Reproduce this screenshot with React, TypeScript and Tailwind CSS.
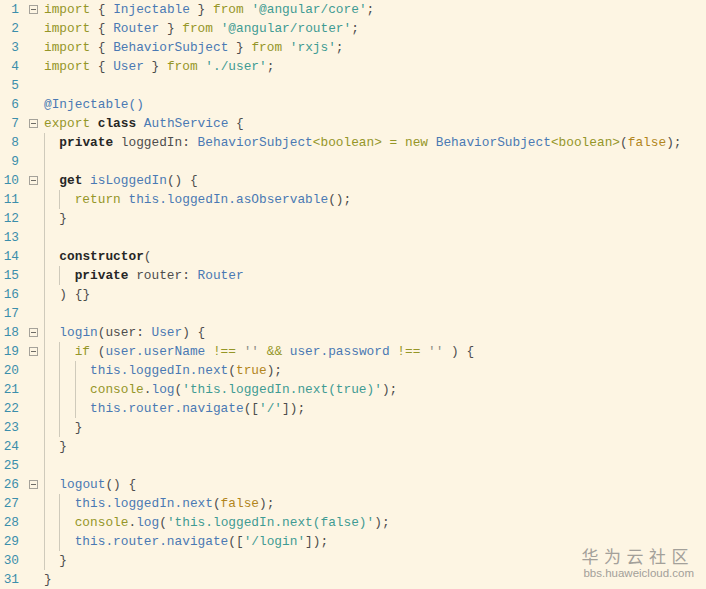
import React from "react";

type Tok = [string, string];
type Line = { g: number; fold?: boolean; toks: Tok[] };

const colors: Record<string, string> = {
  k: "text-[#959628]",
  t: "text-[#4a79b3]",
  s: "text-[#3f9b93]",
  q: "text-[#8e8e86]",
  d: "text-[#262626] font-bold",
  p: "text-[#4d4d4d]",
  b: "text-[#b2851c]",
};

const lines: Line[] = [
  { g: 0, fold: true, toks: [["import", "k"], [" { ", "p"], ["Injectable", "t"], [" } ", "p"], ["from", "k"], [" ", "p"], ["'@angular/core'", "s"], [";", "p"]] },
  { g: 0, toks: [["import", "k"], [" { ", "p"], ["Router", "t"], [" } ", "p"], ["from", "k"], [" ", "p"], ["'@angular/router'", "s"], [";", "p"]] },
  { g: 0, toks: [["import", "k"], [" { ", "p"], ["BehaviorSubject", "t"], [" } ", "p"], ["from", "k"], [" ", "p"], ["'rxjs'", "s"], [";", "p"]] },
  { g: 0, toks: [["import", "k"], [" { ", "p"], ["User", "t"], [" } ", "p"], ["from", "k"], [" ", "p"], ["'./user'", "s"], [";", "p"]] },
  { g: 0, toks: [] },
  { g: 0, toks: [["@Injectable()", "t"]] },
  { g: 0, fold: true, toks: [["export", "k"], [" ", "p"], ["class", "d"], [" ", "p"], ["AuthService", "t"], [" {", "p"]] },
  { g: 1, toks: [["private", "d"], [" loggedIn: ", "p"], ["BehaviorSubject", "t"], ["<boolean>", "k"], [" = ", "k"], ["new", "k"], [" ", "p"], ["BehaviorSubject", "t"], ["<boolean>", "k"], ["(", "p"], ["false", "b"], [");", "p"]] },
  { g: 1, toks: [] },
  { g: 1, fold: true, toks: [["get", "d"], [" ", "p"], ["isLoggedIn", "t"], ["() {", "p"]] },
  { g: 2, toks: [["return", "k"], [" ", "p"], ["this.loggedIn.asObservable", "t"], ["();", "p"]] },
  { g: 1, toks: [["}", "p"]] },
  { g: 1, toks: [] },
  { g: 1, toks: [["constructor", "d"], ["(", "p"]] },
  { g: 2, toks: [["private", "d"], [" router: ", "p"], ["Router", "t"]] },
  { g: 1, toks: [[") {}", "p"]] },
  { g: 1, toks: [] },
  { g: 1, fold: true, toks: [["login", "t"], ["(user: ", "p"], ["User", "t"], [") {", "p"]] },
  { g: 2, fold: true, toks: [["if", "k"], [" (", "p"], ["user.userName", "t"], [" ", "p"], ["!==", "k"], [" ", "p"], ["''", "q"], [" ", "p"], ["&&", "k"], [" ", "p"], ["user.password", "t"], [" ", "p"], ["!==", "k"], [" ", "p"], ["''", "q"], [" ) {", "p"]] },
  { g: 3, toks: [["this.loggedIn.next", "t"], ["(", "p"], ["true", "b"], [");", "p"]] },
  { g: 3, toks: [["console", "k"], [".", "p"], ["log", "t"], ["(", "p"], ["'this.loggedIn.next(true)'", "s"], [");", "p"]] },
  { g: 3, toks: [["this.router.navigate", "t"], ["([", "p"], ["'/'", "s"], ["]);", "p"]] },
  { g: 2, toks: [["}", "p"]] },
  { g: 1, toks: [["}", "p"]] },
  { g: 1, toks: [] },
  { g: 1, fold: true, toks: [["logout", "t"], ["() {", "p"]] },
  { g: 2, toks: [["this.loggedIn.next", "t"], ["(", "p"], ["false", "b"], [");", "p"]] },
  { g: 2, toks: [["console", "k"], [".", "p"], ["log", "t"], ["(", "p"], ["'this.loggedIn.next(false)'", "s"], [");", "p"]] },
  { g: 2, toks: [["this.router.navigate", "t"], ["([", "p"], ["'/login'", "s"], ["]);", "p"]] },
  { g: 1, toks: [["}", "p"]] },
  { g: 0, toks: [["}", "p"]] },
];

function FoldBox() {
  return (
    <span className="ml-[10px] flex h-[9px] w-[9px] items-center justify-center border border-[#a5a29a]">
      <span className="h-px w-[5px] bg-[#6e6c66]" />
    </span>
  );
}

export default function App() {
  return (
    <div className="relative h-[589px] w-[706px] overflow-hidden bg-[#fdf5e3]">
      <div
        className="text-[12.8px] leading-[19px]"
        style={{ fontFamily: '"Liberation Mono", monospace' }}
      >
        {lines.map((line, i) => (
          <div key={i} className="flex h-[19px] items-center">
            <span className="w-[19px] text-right text-[#3b8eab]">{i + 1}</span>
            <span className="flex w-[25px] items-center">{line.fold && <FoldBox />}</span>
            {Array.from({ length: line.g }).map((_, j) => (
              <span key={j} className="inline-block h-[19px] w-[2ch] border-l border-[#cfcabb]" />
            ))}
            <span className="whitespace-pre">
              {line.toks.map(([txt, c], j) => (
                <span key={j} className={colors[c]}>
                  {txt}
                </span>
              ))}
            </span>
          </div>
        ))}
      </div>

      <div className="absolute right-[12px] bottom-[9px] flex flex-col items-end text-[#a3a09a]">
        <span
          className="text-[17px] leading-[20px] tracking-[5.5px]"
          style={{ fontFamily: '"Noto Sans CJK SC", sans-serif' }}
        >
          华为云社区
        </span>
        <span
          className="mt-[1px] text-[11.5px] leading-[13px]"
          style={{ fontFamily: '"Liberation Sans", sans-serif' }}
        >
          bbs.huaweicloud.com
        </span>
      </div>
    </div>
  );
}
